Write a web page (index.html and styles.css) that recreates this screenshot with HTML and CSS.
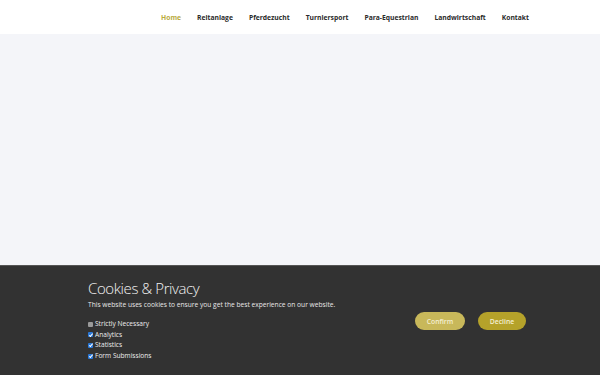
FILE: index.html
```html
<!DOCTYPE html>
<html lang="de">
<head>
<meta charset="utf-8">
<title>Home</title>
<link rel="stylesheet" href="styles.css">
</head>
<body>
<header class="site-header">
  <nav class="main-nav">
    <a class="nav-link active" href="#">Home</a>
    <a class="nav-link" href="#">Reitanlage</a>
    <a class="nav-link" href="#">Pferdezucht</a>
    <a class="nav-link" href="#">Turniersport</a>
    <a class="nav-link" href="#">Para-Equestrian</a>
    <a class="nav-link" href="#">Landwirtschaft</a>
    <a class="nav-link" href="#">Kontakt</a>
  </nav>
</header>
<main class="hero"></main>
<section class="cookie-banner">
  <div class="cookie-text">
    <h2 class="cookie-title">Cookies &amp; Privacy</h2>
    <p class="cookie-desc">This website uses cookies to ensure you get the best experience on our website.</p>
    <ul class="cookie-options">
      <li><span class="box disabled"></span>Strictly Necessary</li>
      <li><span class="box checked"></span>Analytics</li>
      <li><span class="box checked"></span>Statistics</li>
      <li><span class="box checked"></span>Form Submissions</li>
    </ul>
  </div>
  <div class="cookie-actions">
    <button class="btn confirm">Confirm</button>
    <button class="btn decline">Decline</button>
  </div>
</section>
</body>
</html>
```
FILE: styles.css
```css
html, body { margin: 0; padding: 0; }
body {
  width: 600px;
  height: 375px;
  overflow: hidden;
  font-family: "Open Sans", sans-serif;
  background: #f4f5f9;
  display: flex;
  flex-direction: column;
}
.site-header {
  height: 34px;
  background: #ffffff;
  display: flex;
  justify-content: flex-end;
  align-items: center;
  padding: 2px 71px 0 0;
  box-sizing: border-box;
  flex: none;
}
.main-nav { display: flex; gap: 16px; }
.nav-link {
  font-size: 6.75px;
  font-weight: 700;
  color: #2a2a2a;
  text-decoration: none;
  line-height: 10px;
}
.nav-link.active { color: #b9ab3e; }
.hero { flex: 1; background: #f4f5f9; }
.cookie-banner {
  height: 110px;
  flex: none;
  background: #323232;
  border-top: 1px solid #555;
  box-sizing: border-box;
  display: flex;
  align-items: flex-start;
  padding: 0 74px 0 88px;
  color: #eeeeee;
}
.cookie-text { flex: 1; padding-top: 12px; }
.cookie-title {
  margin: 0;
  font-size: 15px;
  font-weight: 300;
  line-height: 20px;
  color: #f2f2f2;
  letter-spacing: -0.4px;
}
.cookie-desc {
  margin: 2px 0 0;
  font-size: 6.65px;
  line-height: 10px;
  color: #e8e8e8;
}
.cookie-options {
  list-style: none;
  margin: 9px 0 0;
  padding: 0;
  font-size: 6.6px;
  line-height: 10.6px;
}
.cookie-options li { display: flex; align-items: center; }
.box {
  position: relative;
  width: 5px; height: 5px;
  border-radius: 1px;
  margin-right: 2px;
  display: inline-block;
}
.box.disabled { background: #9a9a9a; }
.box.checked { background: #2a78d8; }
.box.checked::after {
  content: "";
  position: absolute;
  left: 1.6px; top: 0.4px;
  width: 1.3px; height: 2.8px;
  border: solid #ffffff;
  border-width: 0 1px 1px 0;
  transform: rotate(40deg);
}
.cookie-actions {
  display: flex;
  gap: 13px;
  padding-top: 46px;
}
.btn {
  border: none;
  border-radius: 9px;
  height: 18px;
  padding: 0;
  font-family: "Open Sans", sans-serif;
  font-size: 6.8px;
  font-weight: 600;
  color: #f4efd0;
  cursor: pointer;
}
.btn.confirm { width: 50px; background: #c8b85a; }
.btn.decline { width: 48px; background: #b5a22a; }
```
